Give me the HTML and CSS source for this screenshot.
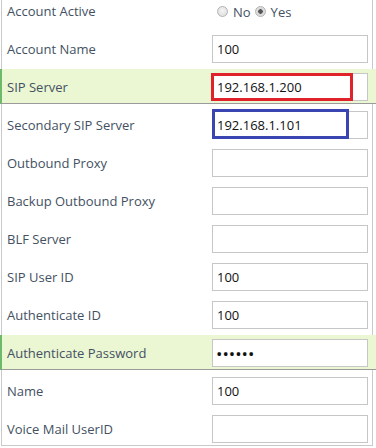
FILE: index.html
```html
<!DOCTYPE html>
<html lang="en">
<head>
    <meta charset="UTF-8">
    <meta name="viewport" content="width=device-width, initial-scale=1.0">
    <title>Account Settings</title>
    <link rel="stylesheet" href="styles.css">
</head>
<body>
    <div class="account-form">
        <div class="row">
            <label class="label">Account Active</label>
            <div class="field radios">
                <input type="radio" name="active" id="activeNo" class="radio">
                <label for="activeNo" class="radio-text">No</label>
                <input type="radio" name="active" id="activeYes" class="radio" checked>
                <label for="activeYes" class="radio-text">Yes</label>
            </div>
        </div>
        <div class="row">
            <label class="label">Account Name</label>
            <div class="field"><input type="text" class="text-input" value="100"></div>
        </div>
        <div class="row highlight">
            <label class="label">SIP Server</label>
            <div class="field">
                <input type="text" class="text-input" value="192.168.1.200">
                <span class="mark mark-red"></span>
            </div>
        </div>
        <div class="row">
            <label class="label">Secondary SIP Server</label>
            <div class="field">
                <input type="text" class="text-input" value="192.168.1.101">
                <span class="mark mark-blue"></span>
            </div>
        </div>
        <div class="row">
            <label class="label">Outbound Proxy</label>
            <div class="field"><input type="text" class="text-input" value=""></div>
        </div>
        <div class="row">
            <label class="label">Backup Outbound Proxy</label>
            <div class="field"><input type="text" class="text-input" value=""></div>
        </div>
        <div class="row">
            <label class="label">BLF Server</label>
            <div class="field"><input type="text" class="text-input" value=""></div>
        </div>
        <div class="row">
            <label class="label">SIP User ID</label>
            <div class="field"><input type="text" class="text-input" value="100"></div>
        </div>
        <div class="row">
            <label class="label">Authenticate ID</label>
            <div class="field"><input type="text" class="text-input" value="100"></div>
        </div>
        <div class="row highlight">
            <label class="label">Authenticate Password</label>
            <div class="field"><input type="password" class="text-input password" value="123456"></div>
        </div>
        <div class="row">
            <label class="label">Name</label>
            <div class="field"><input type="text" class="text-input" value="100"></div>
        </div>
        <div class="row">
            <label class="label">Voice Mail UserID</label>
            <div class="field"><input type="text" class="text-input" value=""></div>
        </div>
    </div>
</body>
</html>
```
FILE: styles.css
```css
body {
    margin: 0;
    font-family: "Open Sans", "Liberation Sans", sans-serif;
    font-size: 13px;
    color: #435163;
    background: #fff;
    overflow: hidden;
}

.account-form {
    width: 370px;
    margin: -7px 0 0 1px;
    border-left: 1px solid #c9c9c9;
    border-right: 1px solid #c9c9c9;
    border-bottom: 1px solid #c9c9c9;
    display: flex;
    flex-direction: column;
    gap: 3px;
}

.row {
    display: flex;
    align-items: center;
    height: 35px;
    padding: 4px 0 3px;
    box-sizing: border-box;
}

.row:last-child {
    height: 34px;
    padding-bottom: 2px;
}

/* highlighted rows */
.row.highlight {
    margin: 0 -5px 0 -2px;
    padding-bottom: 2px;
    background-color: #ebf6d3;
    border-left: 2px solid #6dbb6a;
    border-bottom: 1px solid #9a9a9a;
}

.label {
    flex: 0 0 210px;
    padding-left: 5px;
    box-sizing: border-box;
}

.field {
    position: relative;
    display: flex;
    align-items: center;
}

.text-input {
    width: 156px;
    height: 28px;
    margin: 0;
    padding: 0 4px;
    border: 1px solid #c6c6c6;
    box-sizing: border-box;
    font-family: "Open Sans", "Liberation Sans", sans-serif;
    font-size: 13px;
    color: #111;
    background: #fff;
    outline: none;
}

.text-input.password {
    font-size: 17px;
    padding-left: 3px;
}

.radios {
    padding-left: 5px;
    height: 28px;
    margin-top: 1px;
}

.radio {
    appearance: none;
    -webkit-appearance: none;
    width: 11px;
    height: 11px;
    margin: 0 5px 0 0;
    border: 1px solid #b3b3b3;
    border-radius: 50%;
    box-sizing: border-box;
    background: radial-gradient(circle at 50% 40%, #f4f4f4 0, #dadada 100%);
}

.radio:checked {
    background: radial-gradient(circle, #555 0, #555 2px, #d6d6d6 2.5px, #e8e8e8 100%);
}

.radio-text {
    margin-right: 4px;
}

/* annotation boxes drawn over the inputs */
.mark {
    position: absolute;
    border: 3px solid;
    box-sizing: border-box;
    pointer-events: none;
}

.mark-red {
    border-color: #e0232b;
    left: -1px;
    top: 0;
    width: 142px;
    height: 28px;
}

.mark-blue {
    border-color: #3b45b1;
    left: 0;
    top: -2px;
    width: 137px;
    height: 30px;
}
```
